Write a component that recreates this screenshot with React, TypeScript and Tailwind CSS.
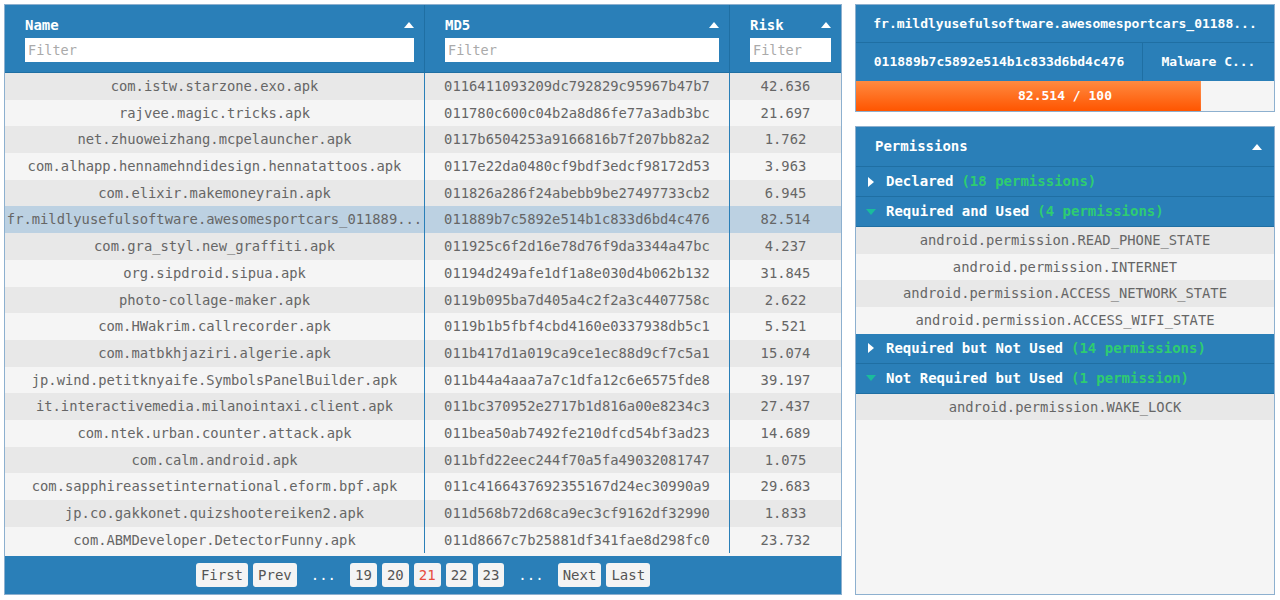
import React from 'react';

const rows: [string, string, string][] = [
  ['com.istw.starzone.exo.apk', '0116411093209dc792829c95967b47b7', '42.636'],
  ['rajvee.magic.tricks.apk', '011780c600c04b2a8d86fe77a3adb3bc', '21.697'],
  ['net.zhuoweizhang.mcpelauncher.apk', '0117b6504253a9166816b7f207bb82a2', '1.762'],
  ['com.alhapp.hennamehndidesign.hennatattoos.apk', '0117e22da0480cf9bdf3edcf98172d53', '3.963'],
  ['com.elixir.makemoneyrain.apk', '011826a286f24abebb9be27497733cb2', '6.945'],
  ['fr.mildlyusefulsoftware.awesomesportcars_011889...', '011889b7c5892e514b1c833d6bd4c476', '82.514'],
  ['com.gra_styl.new_graffiti.apk', '011925c6f2d16e78d76f9da3344a47bc', '4.237'],
  ['org.sipdroid.sipua.apk', '01194d249afe1df1a8e030d4b062b132', '31.845'],
  ['photo-collage-maker.apk', '0119b095ba7d405a4c2f2a3c4407758c', '2.622'],
  ['com.HWakrim.callrecorder.apk', '0119b1b5fbf4cbd4160e0337938db5c1', '5.521'],
  ['com.matbkhjaziri.algerie.apk', '011b417d1a019ca9ce1ec88d9cf7c5a1', '15.074'],
  ['jp.wind.petitknyaife.SymbolsPanelBuilder.apk', '011b44a4aaa7a7c1dfa12c6e6575fde8', '39.197'],
  ['it.interactivemedia.milanointaxi.client.apk', '011bc370952e2717b1d816a00e8234c3', '27.437'],
  ['com.ntek.urban.counter.attack.apk', '011bea50ab7492fe210dfcd54bf3ad23', '14.689'],
  ['com.calm.android.apk', '011bfd22eec244f70a5fa49032081747', '1.075'],
  ['com.sapphireassetinternational.eform.bpf.apk', '011c4166437692355167d24ec30990a9', '29.683'],
  ['jp.co.gakkonet.quizshootereiken2.apk', '011d568b72d68ca9ec3cf9162df32990', '1.833'],
  ['com.ABMDeveloper.DetectorFunny.apk', '011d8667c7b25881df341fae8d298fc0', '23.732'],
];

const mono = "font-['DejaVu_Sans_Mono','Liberation_Mono',monospace]";
const risk = 82.514;

function SortUp() {
  return (
    <svg width="10" height="6" viewBox="0 0 10 6" className="shrink-0">
      <path d="M0 6 L5 0 L10 6 Z" fill="#fff" />
    </svg>
  );
}

function HeaderCell({ title, className }: { title: string; className: string }) {
  return (
    <div className={`${className} flex flex-col pl-5 pr-[10px] pt-[10px] border-r border-[#1f6fa3] last:border-r-0`}>
      <div className="flex items-center justify-between h-[20px]">
        <span className="text-white font-bold text-[14px]">{title}</span>
        <SortUp />
      </div>
      <div className="mt-[3px] h-[24px] bg-white flex items-center px-[3px] text-[13.5px] text-[#aaa]">Filter</div>
    </div>
  );
}

function Caret({ open }: { open: boolean }) {
  return open ? (
    <svg width="10" height="6" viewBox="0 0 10 6" className="shrink-0">
      <path d="M0 0 L10 0 L5 6 Z" fill="#1abc9c" />
    </svg>
  ) : (
    <svg width="6" height="10" viewBox="0 0 6 10" className="shrink-0 mx-[2px]">
      <path d="M0 0 L6 5 L0 10 Z" fill="#fff" />
    </svg>
  );
}

function Section({ label, count, open, items }: { label: string; count: string; open: boolean; items?: string[] }) {
  return (
    <div>
      <div className="h-[30px] bg-[#2a7fb8] border-b border-[#1f6fa3] flex items-center gap-[10px] pl-[10px] text-[14px] font-bold">
        <Caret open={open} />
        <span className="text-white">{label}</span>
        <span className="text-[#2ecc71] -ml-[2px]">{count}</span>
      </div>
      {items && items.map((p, i) => (
        <div key={p} className={`h-[26.7px] flex items-center justify-center text-[13.8px] text-[#666] ${i % 2 === 0 ? 'bg-[#e8e8e8]' : 'bg-[#f5f5f5]'}`}>{p}</div>
      ))}
    </div>
  );
}

function PageBtn({ label, active }: { label: string; active?: boolean }) {
  return (
    <div className={`h-[24px] px-[5px] rounded-[3px] bg-[#f4f4f4] flex items-center justify-center text-[14px] ${active ? 'text-[#e74c3c]' : 'text-[#555]'}`}>{label}</div>
  );
}

export default function App() {
  return (
    <div className={`${mono} w-[1280px] h-[600px] bg-white flex gap-[13px] pl-[4px] pt-[4px]`}>
      <div className="w-[838px] h-[591px] border border-[#8db0cf] bg-[#f5f5f5] flex flex-col">
        <div className="flex h-[68px] bg-[#2a7fb8] border-b border-[#1f6fa3]">
          <HeaderCell title="Name" className="w-[420px]" />
          <HeaderCell title="MD5" className="w-[305px]" />
          <HeaderCell title="Risk" className="flex-1" />
        </div>
        <div className="flex-1">
          {rows.map(([name, md5, r], i) => (
            <div
              key={md5}
              className={`flex h-[26.7px] text-[13.8px] text-[#666] ${i === 5 ? 'bg-[#bcd1e2]' : i % 2 === 0 ? 'bg-[#e8e8e8]' : 'bg-[#f5f5f5]'}`}
            >
              <div className="w-[420px] border-r border-[#2a7fb8] flex items-center justify-center whitespace-nowrap overflow-hidden">{name}</div>
              <div className="w-[305px] border-r border-[#2a7fb8] flex items-center justify-center">{md5}</div>
              <div className="flex-1 flex items-center justify-center">{r}</div>
            </div>
          ))}
        </div>
        <div className="h-[38px] bg-[#2a7fb8] flex items-center justify-center gap-[5px]">
          <PageBtn label="First" />
          <PageBtn label="Prev" />
          <span className="text-white text-[14px] px-[9px]">...</span>
          <PageBtn label="19" />
          <PageBtn label="20" />
          <PageBtn label="21" active />
          <PageBtn label="22" />
          <PageBtn label="23" />
          <span className="text-white text-[14px] px-[9px]">...</span>
          <PageBtn label="Next" />
          <PageBtn label="Last" />
        </div>
      </div>

      <div className="w-[420px] flex flex-col gap-[14px]">
        <div className="border border-[#8db0cf] flex flex-col">
          <div className="h-[38px] bg-[#2a7fb8] border-b border-[#1f6fa3] flex items-center justify-center text-white font-bold text-[13px]">
            fr.mildlyusefulsoftware.awesomesportcars_01188...
          </div>
          <div className="h-[38px] bg-[#2a7fb8] flex text-white font-bold text-[13px]">
            <div className="w-[287px] border-r border-[#1f6fa3] flex items-center justify-center">011889b7c5892e514b1c833d6bd4c476</div>
            <div className="flex-1 flex items-center justify-center">Malware C...</div>
          </div>
          <div
            className="h-[30px] bg-[#f5f5f5] bg-no-repeat flex items-center justify-center text-white font-bold text-[13px]"
            style={{
              backgroundImage: 'linear-gradient(to bottom, #ff8a40, #ff5500)',
              backgroundSize: `${risk}% 100%`,
            }}
          >
            {risk} / 100
          </div>
        </div>

        <div className="h-[469px] border border-[#8db0cf] bg-[#f5f5f5] flex flex-col">
          <div className="h-[40px] bg-[#2a7fb8] border-b border-[#1f6fa3] flex items-center justify-between pl-[19px] pr-[12px]">
            <span className="text-white font-bold text-[14px]">Permissions</span>
            <SortUp />
          </div>
          <Section label="Declared" count="(18 permissions)" open={false} />
          <Section
            label="Required and Used"
            count="(4 permissions)"
            open
            items={[
              'android.permission.READ_PHONE_STATE',
              'android.permission.INTERNET',
              'android.permission.ACCESS_NETWORK_STATE',
              'android.permission.ACCESS_WIFI_STATE',
            ]}
          />
          <Section label="Required but Not Used" count="(14 permissions)" open={false} />
          <Section label="Not Required but Used" count="(1 permission)" open items={['android.permission.WAKE_LOCK']} />
        </div>
      </div>
    </div>
  );
}
